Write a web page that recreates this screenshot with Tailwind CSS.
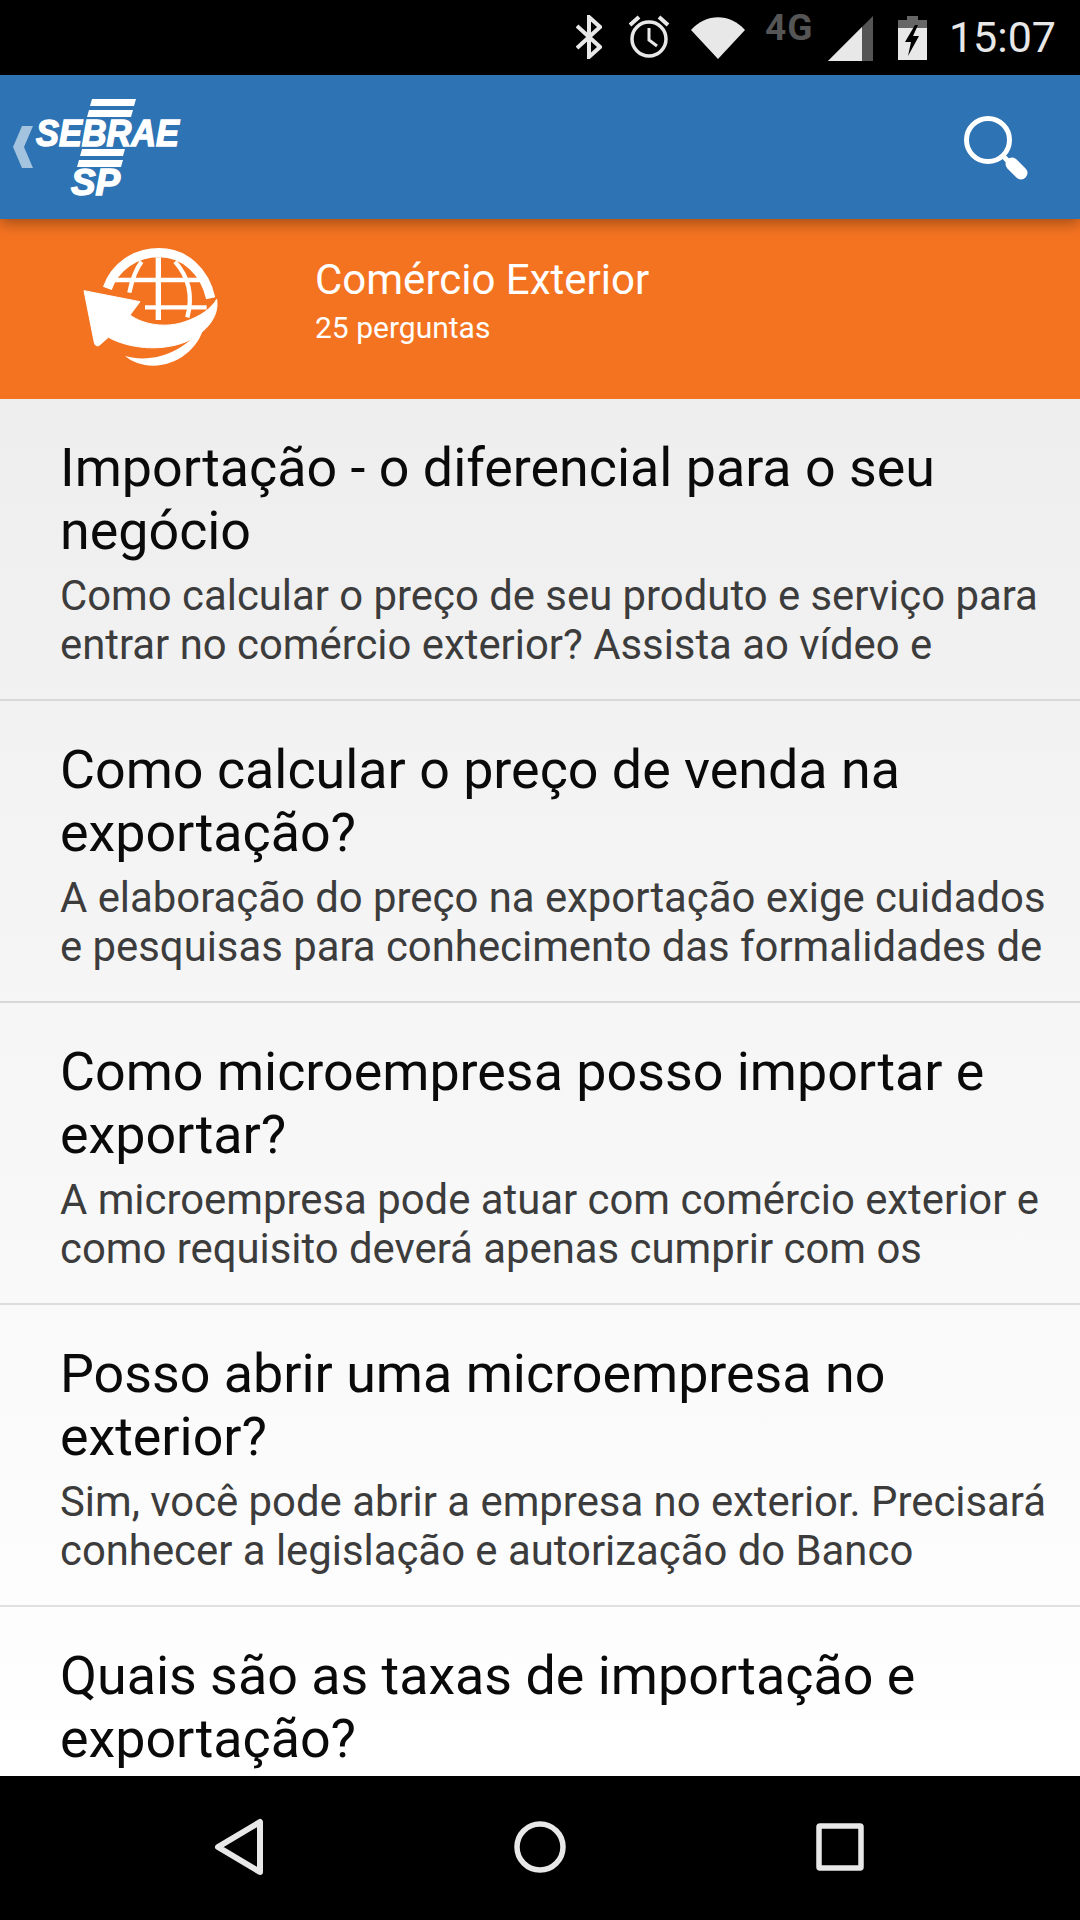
<!DOCTYPE html>
<html lang="pt">
<head>
  <meta charset="UTF-8" />
  <meta name="viewport" content="width=device-width, initial-scale=1.0" />
  <title>Sebrae SP | Comércio Exterior</title>
  <script src="https://cdn.jsdelivr.net/npm/@tailwindcss/browser@4"></script>
</head>
<body class="bg-black font-['Roboto',sans-serif]">
<div class="w-[1080px] h-[1920px] flex flex-col overflow-hidden">

  <!-- status bar -->
  <div class="h-[75px] shrink-0 bg-black flex items-center justify-end pr-[24px] text-[#e8e8e8]">
    <svg class="w-[26px] h-[44px] mb-[2px]" viewBox="0 0 26 44" fill="none" stroke="#e8e8e8" stroke-width="4">
      <path d="M1 11L24 32L13 42V2L24 12L1 33" />
    </svg>
    <svg class="w-[42px] h-[43px] ml-[26px] mb-[2px]" viewBox="0 0 42 43" fill="none" stroke="#e8e8e8">
      <circle cx="21" cy="24" r="17" stroke-width="3.5" />
      <path d="M21 13V25L29 31" stroke-width="3" />
      <path d="M2 10L11 2M40 10L31 2" stroke-width="4" />
    </svg>
    <svg class="w-[54px] h-[42px] ml-[21px]" viewBox="0 0 54 42" fill="#e8e8e8">
      <path d="M0 13C15 -4 39 -4 54 13L27 42Z" />
    </svg>
    <span class="w-[50px] ml-[20px] mb-[21px] text-[37px] leading-[31px] font-bold text-[#555555] tracking-[1px] whitespace-nowrap">4G</span>
    <svg class="w-[45px] h-[45px] ml-[13px] mt-[1px]" viewBox="0 0 45 45">
      <path d="M45 0V45H0Z" fill="#555555" />
      <path d="M34 11V45H0Z" fill="#e8e8e8" />
    </svg>
    <svg class="w-[29px] h-[44px] ml-[25px]" viewBox="0 0 29 44">
      <path d="M9 0H20V4H29V12H0V4H9Z" fill="#666666" />
      <path d="M0 12H29V44H0Z" fill="#e8e8e8" />
      <path d="M17 9L7 26H13L10 40L21 20H15L20 9Z" fill="#000000" />
    </svg>
    <span class="ml-[22px] text-[43px] leading-none text-[#e8e8e8]">15:07</span>
  </div>

  <!-- header -->
  <div class="relative z-10 h-[144px] shrink-0 bg-[#2e73b3] shadow-[0_4px_14px_rgba(0,0,0,0.35)] flex items-center justify-between pr-[48px]">
    <svg class="w-[190px] h-[144px]" viewBox="0 0 190 144">
      <path d="M33 51H22L13 72L22 93H33L24 72Z" fill="#a3c3df" />
      <path d="M92 24H136L134 31H90ZM89 35H133L131 42H87ZM82 74H125L123 81H80ZM79 85H123L121 92H77Z" fill="#ffffff" />
      <text x="36" y="71" textLength="143" lengthAdjust="spacingAndGlyphs" font-family="Liberation Sans" font-size="36" font-weight="700" font-style="italic" fill="#ffffff" stroke="#ffffff" stroke-width="1.5">SEBRAE</text>
      <text x="71" y="120" textLength="49" lengthAdjust="spacingAndGlyphs" font-family="Liberation Sans" font-size="36" font-weight="700" font-style="italic" fill="#ffffff" stroke="#ffffff" stroke-width="1.5">SP</text>
    </svg>
    <svg class="w-[70px] h-[70px] mt-[4px]" viewBox="0 0 70 70" fill="none" stroke="#ffffff" stroke-linecap="round">
      <circle cx="26" cy="26" r="21.5" stroke-width="5" />
      <path d="M42 43L49 50" stroke-width="5" />
      <path d="M50 50L59 59" stroke-width="13" />
    </svg>
  </div>

  <!-- categoria -->
  <div class="h-[180px] shrink-0 bg-[#f47321] flex items-center text-white">
    <svg class="w-[200px] h-[170px] ml-[60px] -mt-[8px] shrink-0" viewBox="0 0 600 510">
      <g fill="none" stroke="#ffffff">
        <path d="M142 205C165 140 225 98 297 98C375 98 435 155 452 235" stroke-width="28" />
        <path d="M295 112V300" stroke-width="16" />
        <path d="M165 180H435" stroke-width="13" />
        <path d="M255 262H440" stroke-width="13" />
        <path d="M245 125C225 150 215 185 208 218" stroke-width="13" />
        <path d="M345 125C385 170 400 225 382 292" stroke-width="13" />
      </g>
      <path d="M72 212L240 245L210 285C250 315 320 325 375 305C420 290 455 265 470 238C478 290 440 335 385 362C320 392 220 392 145 352L118 376C110 380 105 376 103 368Z" fill="#ffffff" stroke="#ffffff" stroke-width="3" stroke-linejoin="round" />
      <path d="M195 408C280 432 375 395 432 315C420 385 350 437 280 437C245 437 215 425 195 408Z" fill="#ffffff" />
    </svg>
    <div class="ml-[55px] -mt-[16px]">
      <p class="text-[42px] leading-[50px]">Comércio Exterior</p>
      <p class="text-[30px] leading-[38px] mt-[4px]">25 perguntas</p>
    </div>
  </div>

  <!-- lista -->
  <div class="flex-1 overflow-hidden bg-gradient-to-b from-[#eeeeee] to-[#ffffff] text-black">
    <div class="h-[302px] pl-[60px] pt-[37px] border-b-2 border-[#d8d8d8]">
      <h2 class="text-[53.8px] leading-[63px] whitespace-nowrap text-[#0a0a0a]">Importação - o diferencial para o seu<br>negócio</h2>
      <p class="mt-[9px] text-[41.85px] leading-[49px] whitespace-nowrap text-[#3c3c3c]">Como calcular o preço de seu produto e serviço para<br>entrar no comércio exterior? Assista ao vídeo e</p>
    </div>
    <div class="h-[302px] pl-[60px] pt-[37px] border-b-2 border-[#d8d8d8]">
      <h2 class="text-[53.8px] leading-[63px] whitespace-nowrap text-[#0a0a0a]">Como calcular o preço de venda na<br>exportação?</h2>
      <p class="mt-[9px] text-[41.85px] leading-[49px] whitespace-nowrap text-[#3c3c3c]">A elaboração do preço na exportação exige cuidados<br>e pesquisas para conhecimento das formalidades de</p>
    </div>
    <div class="h-[302px] pl-[60px] pt-[37px] border-b-2 border-[#dddddd]">
      <h2 class="text-[53.8px] leading-[63px] whitespace-nowrap text-[#0a0a0a]">Como microempresa posso importar e<br>exportar?</h2>
      <p class="mt-[9px] text-[41.85px] leading-[49px] whitespace-nowrap text-[#3c3c3c]">A microempresa pode atuar com comércio exterior e<br>como requisito deverá apenas cumprir com os</p>
    </div>
    <div class="h-[302px] pl-[60px] pt-[37px] border-b-2 border-[#e0e0e0]">
      <h2 class="text-[53.8px] leading-[63px] whitespace-nowrap text-[#0a0a0a]">Posso abrir uma microempresa no<br>exterior?</h2>
      <p class="mt-[9px] text-[41.85px] leading-[49px] whitespace-nowrap text-[#3c3c3c]">Sim, você pode abrir a empresa no exterior. Precisará<br>conhecer a legislação e autorização do Banco</p>
    </div>
    <div class="h-[302px] pl-[60px] pt-[37px]">
      <h2 class="text-[53.8px] leading-[63px] whitespace-nowrap text-[#0a0a0a]">Quais são as taxas de importação e<br>exportação?</h2>
    </div>
  </div>

  <!-- navegacao -->
  <div class="h-[144px] shrink-0 bg-black flex items-center justify-between pl-[213px] pr-[216px] pb-[2px]">
    <svg class="w-[52px] h-[58px]" viewBox="0 0 52 58" fill="none" stroke="#e8e8e8" stroke-width="6" stroke-linejoin="round">
      <path d="M47 4V54L5 29Z" />
    </svg>
    <svg class="w-[52px] h-[52px] -ml-[2px]" viewBox="0 0 52 52" fill="none" stroke="#e8e8e8" stroke-width="5.5">
      <circle cx="26" cy="26" r="23" />
    </svg>
    <svg class="w-[48px] h-[48px]" viewBox="0 0 48 48" fill="none" stroke="#e8e8e8" stroke-width="5.5" stroke-linejoin="round">
      <rect x="3" y="3" width="42" height="42" rx="1" />
    </svg>
  </div>
</div>
</body>
</html>
